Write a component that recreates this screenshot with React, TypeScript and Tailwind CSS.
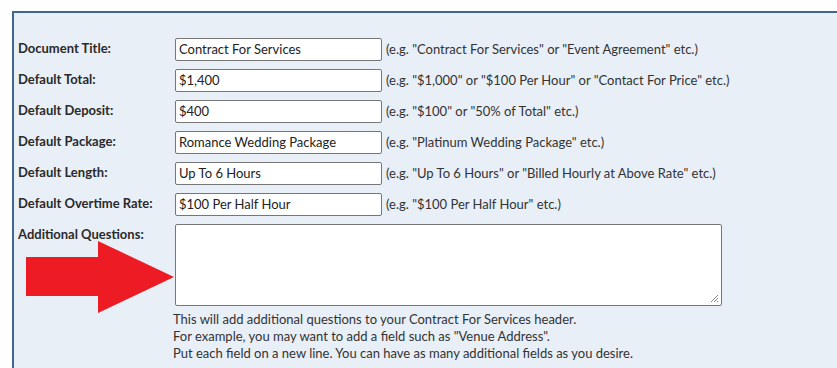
import React from "react";

const rows = [
  { label: "Document Title:", value: "Contract For Services", hint: '(e.g. "Contract For Services" or "Event Agreement" etc.)' },
  { label: "Default Total:", value: "$1,400", hint: '(e.g. "$1,000" or "$100 Per Hour" or "Contact For Price" etc.)' },
  { label: "Default Deposit:", value: "$400", hint: '(e.g. "$100" or "50% of Total" etc.)' },
  { label: "Default Package:", value: "Romance Wedding Package", hint: '(e.g. "Platinum Wedding Package" etc.)' },
  { label: "Default Length:", value: "Up To 6 Hours", hint: '(e.g. "Up To 6 Hours" or "Billed Hourly at Above Rate" etc.)' },
  { label: "Default Overtime Rate:", value: "$100 Per Half Hour", hint: '(e.g. "$100 Per Half Hour" etc.)' },
];

const font = { fontFamily: "Lato, 'Open Sans', sans-serif" };

export default function App() {
  return (
    <div className="w-[837px] h-[368px] overflow-hidden bg-white pt-[11px] pl-[12px] text-[13px] text-[#222]" style={font}>
      <div className="h-[400px] border-t-2 border-l-2 border-[#3e6893] bg-[#e8eff7] pl-[4px] pt-[25px]">
        <div className="flex flex-col gap-[8px]">
          {rows.map((r) => (
            <div key={r.label} className="flex items-start h-[23px]">
              <div className="w-[157px] font-bold text-[#2a2a2a] pt-[1px]">{r.label}</div>
              <div className="w-[207px] h-[23px] bg-white border border-[#767676] rounded-[2px] px-[3px] flex items-center">
                {r.value}
              </div>
              <div className="pl-[4px] h-[23px] flex items-center text-[#333]">{r.hint}</div>
            </div>
          ))}
          <div className="flex items-start relative">
            <div className="w-[157px] font-bold text-[#2a2a2a] pt-[1px]">Additional Questions:</div>
            <div className="flex flex-col">
              <div className="w-[547px] h-[82px] bg-white border border-[#767676] rounded-[2px] relative">
                <svg className="absolute right-[2px] bottom-[2px]" width="9" height="9" viewBox="0 0 9 9">
                  <path d="M8 1 L1 8 M8 4 L4 8 M8 7 L7 8" stroke="#888" strokeWidth="1" />
                </svg>
              </div>
              <div className="mt-[5px] leading-[17px] text-[#333] pl-[-2px] -ml-[2px]">
                <div>This will add additional questions to your Contract For Services header.</div>
                <div>For example, you may want to add a field such as "Venue Address".</div>
                <div>Put each field on a new line. You can have as many additional fields as you desire.</div>
              </div>
            </div>
            <svg className="absolute left-[8px] top-[17px]" width="150" height="74" viewBox="0 0 150 74">
              <polygon points="0,16 72,16 72,0 148,36 72,72 72,55 0,55" fill="#ed1c24" />
            </svg>
          </div>
        </div>
      </div>
    </div>
  );
}
